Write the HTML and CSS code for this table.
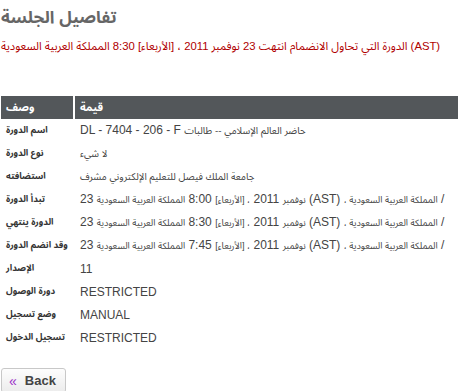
FILE: index.html
```html
<!DOCTYPE html>
<html>
<head>
<meta charset="utf-8">
<link rel="stylesheet" href="styles.css">
</head>
<body>
<div class="page">
  <h1 class="title">تفاصيل الجلسة</h1>
  <p class="notice">الدورة التي تحاول الانضمام انتهت 23 نوفمبر 2011 ، [الأربعاء] 8:30 المملكة العربية السعودية (AST)</p>
  <table class="details">
    <colgroup><col class="c-lab"><col class="c-val"></colgroup>
    <thead>
      <tr><th class="lab">وصف</th><th class="val">قيمة</th></tr>
    </thead>
    <tbody>
      <tr><td class="lab">اسم الدورة</td><td class="val">DL - 7404 - 206 - F <span class="ar">حاضر العالم الإسلامي -- طالبات</span></td></tr>
      <tr><td class="lab">نوع الدورة</td><td class="val"><span class="ar">لا شيء</span></td></tr>
      <tr><td class="lab">استضافته</td><td class="val"><span class="ar">جامعة الملك فيصل للتعليم الإلكتروني مشرف</span></td></tr>
      <tr class="date"><td class="lab">تبدأ الدورة</td><td class="val">23 <span class="ar">نوفمبر</span> 2011 <span class="ar">، [الأربعاء]</span> 8:00 <span class="ar">المملكة العربية السعودية</span> (AST) <span class="ar">، المملكة العربية السعودية</span> /</td></tr>
      <tr class="date"><td class="lab">الدورة ينتهي</td><td class="val">23 <span class="ar">نوفمبر</span> 2011 <span class="ar">، [الأربعاء]</span> 8:30 <span class="ar">المملكة العربية السعودية</span> (AST) <span class="ar">، المملكة العربية السعودية</span> /</td></tr>
      <tr class="date"><td class="lab">وقد انضم الدورة</td><td class="val">23 <span class="ar">نوفمبر</span> 2011 <span class="ar">، [الأربعاء]</span> 7:45 <span class="ar">المملكة العربية السعودية</span> (AST) <span class="ar">، المملكة العربية السعودية</span> /</td></tr>
      <tr><td class="lab">الإصدار</td><td class="val">11</td></tr>
      <tr><td class="lab">دورة الوصول</td><td class="val">RESTRICTED</td></tr>
      <tr><td class="lab">وضع تسجيل</td><td class="val">MANUAL</td></tr>
      <tr><td class="lab">تسجيل الدخول</td><td class="val">RESTRICTED</td></tr>
    </tbody>
  </table>
  <button class="back" type="button"><span class="arrow">«</span>Back</button>
</div>
</body>
</html>
```

FILE: styles.css
```css
html, body {
  margin: 0;
  padding: 0;
  background: #fff;
}
body {
  font-family: "Liberation Sans", "Noto Sans Arabic", "DejaVu Sans", sans-serif;
  font-size: 12px;
  color: #333;
}
.page {
  display: flex;
  flex-direction: column;
  align-items: flex-start;
  overflow: hidden;
  width: 458px;
}
.title {
  margin: 6px 0 0 1px;
  font-size: 17px;
  font-weight: bold;
  color: #666;
  line-height: 24px;
}
.notice {
  margin: 8px 0 0 1px;
  white-space: nowrap;
  color: #b00000;
  font-size: 11.3px;
  line-height: 16px;
}
.details {
  margin: 42px 0 0 1px;
  width: 457px;
  border-collapse: collapse;
  table-layout: fixed;
}
.c-lab { width: 73px; }
.details th {
  background: #53575a;
  color: #fff;
  font-weight: bold;
  font-size: 11px;
  height: 23px;
  padding: 0 0 0 5px;
  text-align: left;
}
.details th.val { border-left: 2px solid #fff; padding-left: 5px; }
.details td {
  height: 23px;
  padding: 0;
  white-space: nowrap;
  overflow: hidden;
  text-align: left;
}
.details td.lab {
  padding-left: 5px;
  font-weight: bold;
  font-size: 9px;
  color: #333;
}
.details td.val {
  padding-left: 6px;
  font-size: 12px;
  color: #444;
}
.details td.val .ar {
  font-size: 9.8px;
}
.details tr.date td.val .ar {
  font-size: 9.2px;
}
.back {
  margin: 19px 0 0 1px;
  height: 25px;
  padding: 0 9px 0 7px;
  border: 1px solid #c8c8c8;
  border-radius: 3px;
  background: linear-gradient(#fdfdfd, #ececec);
  font-family: "Liberation Sans", sans-serif;
  font-size: 13px;
  font-weight: bold;
  color: #444;
  display: flex;
  align-items: center;
  gap: 8px;
}
.back .arrow {
  color: #9b30c8;
  font-weight: normal;
  font-size: 14px;
}
```
